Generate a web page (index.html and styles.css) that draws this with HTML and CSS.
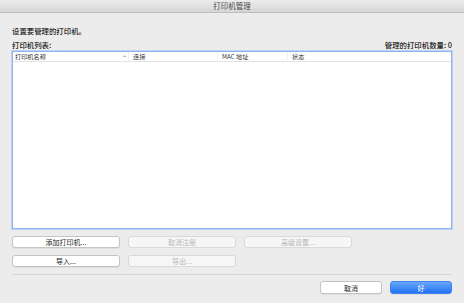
FILE: index.html
```html
<!DOCTYPE html>
<html lang="zh-CN">
<head>
  <meta charset="UTF-8">
  <title>打印机管理</title>
  <link rel="stylesheet" href="styles.css">
</head>
<body>

  <div class="titlebar">打印机管理</div>

  <div class="main">
    <div class="intro">设置要管理的打印机。</div>

    <div class="list-head">
      <span>打印机列表:</span>
      <span>管理的打印机数量: 0</span>
    </div>

    <div class="table">
      <div class="thead">
        <div class="th th-name">打印机名称<span class="sort">&#8963;</span></div>
        <div class="th">连接</div>
        <div class="th">MAC 地址</div>
        <div class="th">状态</div>
      </div>
      <div class="tbody"></div>
    </div>

    <div class="btn-row">
      <button class="btn">添加打印机...</button>
      <button class="btn" disabled>取消注册</button>
      <button class="btn" disabled>高级设置...</button>
    </div>
    <div class="btn-row">
      <button class="btn">导入...</button>
      <button class="btn" disabled>导出...</button>
    </div>

    <div class="divider"></div>

    <div class="footer">
      <button class="btn btn-small">取消</button>
      <button class="btn btn-small btn-primary">好</button>
    </div>
  </div>

</body>
</html>
```

FILE: styles.css
```css
html, body {
  margin: 0;
  padding: 0;
}
body {
  width: 464px;
  height: 303px;
  overflow: hidden;
  background-color: #ececec;
  font-family: "Noto Sans CJK SC", "Noto Sans", sans-serif;
  font-size: 7px;
  color: #222;
}
.titlebar {
  height: 12px;
  line-height: 12px;
  text-align: center;
  font-size: 7.5px;
  color: #4a4a4a;
  background: linear-gradient(#ececec, #d6d6d6);
  border-bottom: 1px solid #bdbdbd;
}
.main {
  padding: 0 11px;
}
.intro {
  margin-top: 13px;
  height: 10px;
  line-height: 10px;
  padding-left: 1px;
  font-size: 7.4px;
  font-weight: 500;
}
.list-head {
  display: flex;
  justify-content: space-between;
  margin-top: 4px;
  height: 10px;
  line-height: 10px;
  padding: 0 1px;
  font-size: 7.4px;
  font-weight: 500;
}
.table {
  margin-top: 1px;
  height: 178px;
  box-sizing: border-box;
  background-color: #fff;
  border: 1px solid #8fb3ee;
  box-shadow: 0 0 0 1px #bcd2f6;
  margin-left: 1px;
  margin-right: 1px;
}
.thead {
  display: grid;
  grid-template-columns: 115px 89px 70px 1fr;
  height: 9px;
  line-height: 9px;
  border-bottom: 1px solid #e3e3e3;
  font-size: 6.2px;
  color: #333;
}
.th {
  padding-left: 4px;
  border-left: 1px solid #f1f1f1;
}
.th:first-child {
  border-left: none;
  padding-left: 2px;
}
.th-name {
  position: relative;
}
.sort {
  position: absolute;
  right: 1px;
  top: 1px;
  font-size: 6px;
  color: #555;
}
.btn-row {
  display: flex;
  gap: 8px;
  margin-top: 7px;
  padding-left: 1px;
}
.btn-row:first-of-type {
  margin-top: 5px;
}
.btn {
  width: 108px;
  height: 12px;
  padding: 0;
  box-sizing: border-box;
  font-family: inherit;
  font-size: 7px;
  line-height: 10px;
  color: #222;
  background-color: #fff;
  border: 1px solid #c4c4c4;
  border-radius: 3px;
  box-shadow: 0 1px 0 rgba(0,0,0,0.06);
}
.btn:disabled {
  color: #b8b8b8;
  background-color: #f6f6f6;
  border-color: #d9d9d9;
  box-shadow: none;
}
.divider {
  margin: 7px 1px 0 1px;
  border-top: 1px solid #d6d6d6;
}
.footer {
  display: flex;
  justify-content: flex-end;
  gap: 8px;
  margin-top: 6px;
  padding-right: 1px;
}
.btn-small {
  width: 62px;
  height: 13px;
}
.btn-primary {
  color: #fff;
  background: linear-gradient(#6aa6fb, #1f72f5);
  border-color: #3f83ee;
}
```
